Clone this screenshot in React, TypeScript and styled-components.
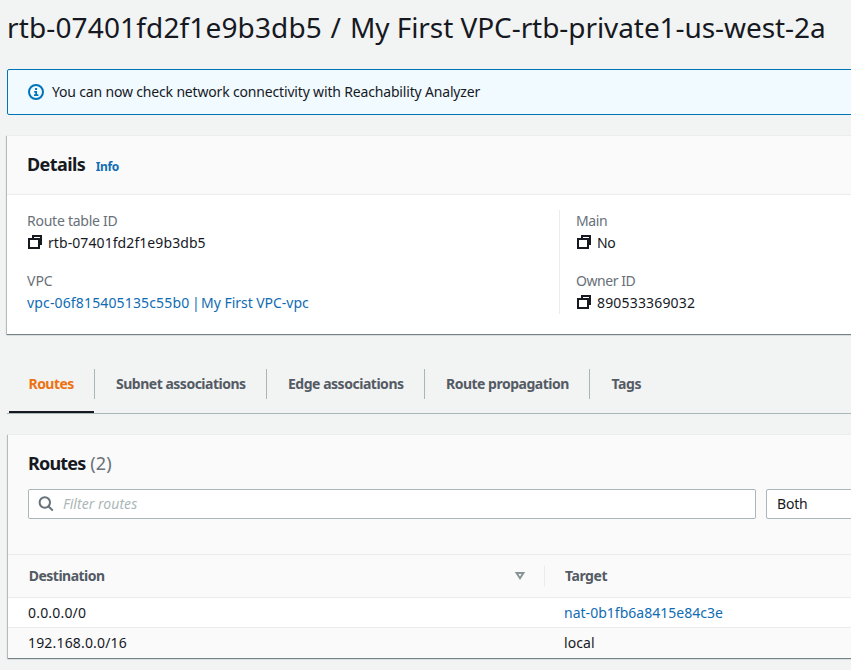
import React from "react";
import styled, { createGlobalStyle } from "styled-components";

const Global = createGlobalStyle`
  *, *::before, *::after { box-sizing: border-box; }
  html, body { margin: 0; background: #f2f3f3; overflow: hidden; }
  body { font: 400 14px/22px "Noto Sans", "Open Sans", sans-serif; color: #16191f; }
  h1, h2, ul, dl, dt, dd { margin: 0; padding: 0; }
`;

const Page = styled.main`
  height: 670px;
  overflow: hidden;
  padding-top: 9px;
`;

const Text = styled.span<{ $track?: number }>`
  letter-spacing: ${(p) => p.$track ?? 0}px;
  white-space: nowrap;
`;

const Title = styled.h1`
  padding-left: 7px;
  font-size: 28px;
  line-height: 36px;
  font-weight: 400;
  white-space: nowrap;
`;

const Slash = styled.span`
  margin: 0 2px 0 1px;
`;

const Banner = styled.section`
  display: flex;
  align-items: center;
  gap: 8px;
  height: 46px;
  margin: 24px -4px 0 7px;
  padding-left: 20px;
  background: #f1faff;
  border: 1px solid #0073bb;
  border-radius: 2px;
`;

const Card = styled.section<{ $left: number; $gap: number }>`
  margin: ${(p) => p.$gap}px -4px 0 ${(p) => p.$left}px;
  background: #fff;
  border-top: 1px solid #eaeded;
  box-shadow: 0 1px 1px 0 rgba(0, 28, 36, 0.4), -1px 1px 1px 0 rgba(0, 28, 36, 0.2);
`;

const CardHeader = styled.header`
  display: flex;
  align-items: baseline;
  gap: 10.5px;
  height: 59px;
  padding: 17px 20px 0;
  background: #fafafa;
  border-bottom: 1px solid #eaeded;
`;

const Heading = styled.h2`
  font-size: 18px;
  line-height: 22px;
  font-weight: 700;
`;

const Count = styled.span`
  font-weight: 400;
  color: #687078;
`;

const Link = styled.a<{ $small?: boolean }>`
  color: #0f6cb3;
  white-space: pre;
  ${(p) => p.$small && "font-size: 12px; font-weight: 700;"}
`;

const DetailGrid = styled.div`
  display: grid;
  grid-template-columns: 532px 1fr;
  padding: 15px 20px 20px;
`;

const DetailColumn = styled.dl<{ $divided?: boolean }>`
  display: grid;
  row-gap: 16px;
  height: 104px;
  ${(p) => p.$divided && "border-left: 1px solid #eaeded; padding-left: 16px;"}
`;

const Label = styled.dt`
  color: #687078;
  height: 22px;
`;

const Value = styled.dd`
  display: flex;
  align-items: center;
  gap: 5px;
  height: 22px;
`;

const Tabs = styled.ul`
  display: flex;
  height: 60px;
  margin: 20px 0 0 7px;
  padding-left: 2px;
  list-style: none;
  border-bottom: 1px solid #aab7b8;
`;

const Tab = styled.li<{ $width: number; $active?: boolean }>`
  width: ${(p) => p.$width}px;
  padding-top: 15px;
  height: 59px;
  font-weight: 700;
  color: ${(p) => (p.$active ? "#ec7211" : "#545b64")};
  border-bottom: 2px solid ${(p) => (p.$active ? "#16191f" : "transparent")};
`;

const TabLabel = styled.div<{ $last?: boolean; $first?: boolean }>`
  height: 30px;
  padding: 4px 0 0 ${(p) => (p.$first ? 19.5 : p.$last ? 22.6 : 22)}px;
  ${(p) => !p.$last && "border-right: 1px solid #aab7b8; margin-right: -1px;"}
`;

const Tools = styled.div`
  height: 119px;
  padding: 17px 20px 0;
  background: #fafafa;
`;

const Filters = styled.div`
  display: flex;
  gap: 10px;
  margin-top: 15px;
`;

const Field = styled.div<{ $width: number; $search?: boolean }>`
  display: flex;
  align-items: center;
  flex: none;
  gap: 9px;
  width: ${(p) => p.$width}px;
  height: 30px;
  padding-left: ${(p) => (p.$search ? 9 : 10)}px;
  background: #fff;
  border: 1px solid #aab7b8;
  border-radius: 2px;
`;

const Placeholder = styled.em`
  color: #aab7b8;
`;

const HeadRow = styled.div`
  display: grid;
  grid-template-columns: 536px 1fr;
  align-items: center;
  height: 44px;
  background: #fafafa;
  border-top: 1px solid #eaeded;
  border-bottom: 1px solid #eaeded;
  font-weight: 700;
  color: #545b64;
`;

const BodyRow = styled.div<{ $striped?: boolean }>`
  display: grid;
  grid-template-columns: 536px 1fr;
  height: ${(p) => (p.$striped ? 31 : 29)}px;
  padding-top: 4px;
  background: ${(p) => (p.$striped ? "#fafafa" : "#fff")};
  ${(p) => p.$striped && "border-top: 1px solid #eaeded;"}
`;

const HeadCell = styled.div<{ $divided?: boolean }>`
  display: flex;
  align-items: center;
  justify-content: space-between;
  height: 21px;
  padding: 0 18px 0 ${(p) => (p.$divided ? 20 : 20.8)}px;
  ${(p) => p.$divided && "border-left: 1px solid #eaeded;"}
`;

const Cell = styled.div`
  padding-left: 20px;
`;

const CopyIcon = () => (
  <svg width="16" height="16" viewBox="0 0 16 16" fill="none" stroke="#16191f" strokeWidth="2">
    <path d="M2 4h10v9H2z" />
    <path d="M6 4V1h8v8h-2" />
  </svg>
);

const InfoIcon = () => (
  <svg width="16" height="16" viewBox="0 0 16 16" fill="none" stroke="#0073bb" strokeWidth="2">
    <circle cx="8" cy="8" r="7" />
    <path d="M6 11.2h4.4M8.2 12V7.8H6.2" strokeWidth="1.7" />
    <path d="M7.1 5h2" />
  </svg>
);

const SearchIcon = () => (
  <svg width="16" height="16" viewBox="0 0 16 16" fill="none" stroke="#687078" strokeWidth="2">
    <circle cx="6.8" cy="6.5" r="5.2" />
    <path d="M10.4 10.2l4.4 4.4" />
  </svg>
);

const SortIcon = () => (
  <svg width="12" height="10" viewBox="0 0 12 10" fill="none" stroke="#879596" strokeWidth="2">
    <path d="M2.6 2h6.8L6 7.2z" />
  </svg>
);

type Part = [text: string, track: number];
type Item = { label: string; labelTrack: number; value: Part[]; link?: boolean };

const left: Item[] = [
  { label: "Route table ID", labelTrack: -0.25, value: [["rtb-07401fd2f1e9b3db5", 0.08]] },
  {
    label: "VPC",
    labelTrack: 0,
    value: [["vpc-06f815405135c55b0", 0.15], [" | ", -1.1], ["My First VPC-vpc", -0.04]],
    link: true,
  },
];

const right: Item[] = [
  { label: "Main", labelTrack: -0.35, value: [["No", -0.4]] },
  { label: "Owner ID", labelTrack: -0.45, value: [["890533369032", 0.17]] },
];

const tabs = [
  { label: "Routes", width: 85, track: -0.55 },
  { label: "Subnet associations", width: 172, track: -0.49 },
  { label: "Edge associations", width: 158, track: -0.477 },
  { label: "Route propagation", width: 165, track: -0.5 },
  { label: "Tags", width: 80, track: -0.45 },
];

const Details = ({ items, divided }: { items: Item[]; divided?: boolean }) => (
  <DetailColumn $divided={divided}>
    {items.map((item) => {
      const parts = item.value.map(([text, track]) => (
        <Text key={text} $track={track}>{text}</Text>
      ));
      return (
        <div key={item.label}>
          <Label><Text $track={item.labelTrack}>{item.label}</Text></Label>
          <Value>
            {item.link ? <Link>{parts}</Link> : <><CopyIcon />{parts}</>}
          </Value>
        </div>
      );
    })}
  </DetailColumn>
);

export default function App() {
  return (
    <>
      <Global />
      <Page>
        <Title>
          <Text $track={0.14}>rtb-07401fd2f1e9b3db5 </Text>
          <Slash>/</Slash>
          <Text $track={-0.07}> My First VPC-rtb-private1-us-west-2a</Text>
        </Title>
        <Banner>
          <InfoIcon />
          <Text $track={-0.17}>You can now check network connectivity with Reachability Analyzer</Text>
        </Banner>
        <Card $left={7} $gap={20}>
          <CardHeader>
            <Heading><Text $track={-0.58}>Details</Text></Heading>
            <Link $small><Text $track={-0.35}>Info</Text></Link>
          </CardHeader>
          <DetailGrid>
            <Details items={left} />
            <Details items={right} divided />
          </DetailGrid>
        </Card>
        <Tabs>
          {tabs.map((tab, i) => (
            <Tab key={tab.label} $width={tab.width} $active={i === 0}>
              <TabLabel $first={i === 0} $last={i === tabs.length - 1}>
                <Text $track={tab.track}>{tab.label}</Text>
              </TabLabel>
            </Tab>
          ))}
        </Tabs>
        <Card $left={8} $gap={20}>
          <Tools>
            <Heading>
              <Text $track={-0.8}>Routes</Text> <Count><Text $track={0.15}>(2)</Text></Count>
            </Heading>
            <Filters>
              <Field $width={728} $search>
                <SearchIcon />
                <Placeholder><Text $track={0.04}>Filter routes</Text></Placeholder>
              </Field>
              <Field $width={120}><Text $track={-0.2}>Both</Text></Field>
            </Filters>
          </Tools>
          <HeadRow>
            <HeadCell><Text $track={-0.52}>Destination</Text><SortIcon /></HeadCell>
            <HeadCell $divided><Text $track={-0.45}>Target</Text></HeadCell>
          </HeadRow>
          <BodyRow>
            <Cell><Text $track={0.188}>0.0.0.0/0</Text></Cell>
            <Cell><Link><Text $track={0.017}>nat-0b1fb6a8415e84c3e</Text></Link></Cell>
          </BodyRow>
          <BodyRow $striped>
            <Cell><Text $track={0.17}>192.168.0.0/16</Text></Cell>
            <Cell><Text $track={0.086}>local</Text></Cell>
          </BodyRow>
        </Card>
      </Page>
    </>
  );
}
